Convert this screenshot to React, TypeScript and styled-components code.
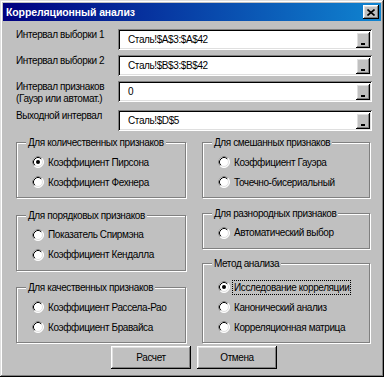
import React from 'react';
import styled, { createGlobalStyle } from 'styled-components';

const GlobalStyle = createGlobalStyle`
    html, body {
        margin: 0;
        padding: 0;
        background: #c0c0c0;
    }
    body {
        font-family: "Liberation Sans", Arial, sans-serif;
        font-size: 10px;
        letter-spacing: -0.4px;
        color: #000;
    }
    * {
        box-sizing: border-box;
    }
`;

const raised = `
    background: #c0c0c0;
    box-shadow: inset -1px -1px #000, inset 1px 1px #fff, inset -2px -2px #808080, inset 2px 2px #dfdfdf;
`;

const Window = styled.div`
    width: 384px;
    height: 377px;
    padding: 3px;
    display: flex;
    flex-direction: column;
    background: #c0c0c0;
    box-shadow: inset -1px -1px #000, inset 1px 1px #dfdfdf, inset -2px -2px #808080, inset 2px 2px #fff;
`;

const TitleBar = styled.div`
    height: 18px;
    display: flex;
    align-items: center;
    justify-content: space-between;
    padding: 0 2px 0 3px;
    background: linear-gradient(to right, #000080, #1084d0);
`;

const Title = styled.span`
    color: #fff;
    font-weight: bold;
    font-size: 10.5px;
    letter-spacing: -0.1px;
`;

const CloseButton = styled.button`
    width: 16px;
    height: 14px;
    padding: 0;
    border: none;
    display: flex;
    align-items: center;
    justify-content: center;
    ${raised}
`;

const Body = styled.div`
    flex: 1;
    display: flex;
    flex-direction: column;
    padding: 8px 9px 0 13px;
`;

const Fields = styled.div`
    display: grid;
    grid-template-columns: 102px 1fr;
    row-gap: 5px;
    align-items: start;
`;

const FieldLabel = styled.div`
    line-height: 12px;
    white-space: nowrap;
`;

const TextBox = styled.div`
    height: 21px;
    display: flex;
    align-items: center;
    justify-content: space-between;
    padding: 2px 2px 2px 10px;
    background: #fff;
    box-shadow: inset 1px 1px #808080, inset -1px -1px #fff, inset 2px 2px #000, inset -2px -2px #dfdfdf;
`;

const PickButton = styled.button`
    width: 14px;
    height: 16px;
    padding: 0 0 3px 0;
    border: none;
    display: flex;
    align-items: flex-end;
    justify-content: center;
    ${raised}

    &::after {
        content: '';
        width: 4px;
        height: 2px;
        background: #000;
    }
`;

const Groups = styled.div`
    display: grid;
    grid-template-columns: 170px 168px;
    column-gap: 16px;
    margin-top: 5px;
`;

const Column = styled.div`
    height: 207px;
    display: flex;
    flex-direction: column;
    justify-content: space-between;
`;

const Group = styled.fieldset<{ $padTop: number }>`
    margin: 0;
    padding: ${(p) => p.$padTop}px 0 5px 0;
    min-width: 0;
    border: 1px solid #808080;
    box-shadow: inset 1px 1px #fff, 1px 1px #fff;
`;

const Legend = styled.legend`
    margin-left: 9px;
    padding: 0 2px;
    line-height: 13px;
    background: #c0c0c0;
    white-space: nowrap;
`;

const Options = styled.div`
    display: flex;
    flex-direction: column;
    padding-left: 15px;
`;

const Option = styled.div`
    height: 20px;
    display: flex;
    align-items: center;
    gap: 3px;
    white-space: nowrap;
`;

const OptionText = styled.span<{ $focused?: boolean }>`
    padding: 0 1px;
    line-height: 13px;
    outline: ${(p) => (p.$focused ? '1px dotted #000' : 'none')};
`;

const RadioSvg = styled.svg`
    flex-shrink: 0;
`;

const Actions = styled.div`
    display: flex;
    justify-content: center;
    gap: 6px;
    margin-top: 3px;
`;

const Button = styled.button`
    width: 80px;
    height: 23px;
    border: none;
    padding: 0;
    font-family: inherit;
    font-size: 10px;
    letter-spacing: -0.4px;
    color: #000;
    ${raised}
`;

const Radio = ({ checked }: { checked?: boolean }) => (
    <RadioSvg width="12" height="12" viewBox="0 0 12 12">
        <circle cx="6" cy="6" r="5.5" fill="#fff" stroke="#fff" />
        <path d="M2.11 9.89A5.5 5.5 0 0 1 9.89 2.11" stroke="#808080" fill="none" />
        <circle cx="6" cy="6" r="4.5" fill="#fff" stroke="#dfdfdf" />
        <path d="M2.82 9.18A4.5 4.5 0 0 1 9.18 2.82" stroke="#000" fill="none" />
        {checked && <circle cx="6" cy="6" r="2" fill="#000" />}
    </RadioSvg>
);

interface OptionDef {
    label: string;
    checked?: boolean;
    focused?: boolean;
}

interface RadioGroupProps {
    title: string;
    options: OptionDef[];
    padTop?: number;
}

const RadioGroup = ({ title, options, padTop = 3 }: RadioGroupProps) => (
    <Group $padTop={padTop}>
        <Legend>{title}</Legend>
        <Options>
            {options.map((o) => (
                <Option key={o.label}>
                    <Radio checked={o.checked} />
                    <OptionText $focused={o.focused}>{o.label}</OptionText>
                </Option>
            ))}
        </Options>
    </Group>
);

const fields = [
    { label: 'Интервал выборки 1', value: 'Сталь!$A$3:$A$42' },
    { label: 'Интервал выборки 2', value: 'Сталь!$B$3:$B$42' },
    { label: 'Интервал признаков\n(Гауэр или автомат.)', value: '0' },
    { label: 'Выходной интервал', value: 'Сталь!$D$5' },
];

const App = () => (
    <>
        <GlobalStyle />
        <Window>
            <TitleBar>
                <Title>Корреляционный анализ</Title>
                <CloseButton aria-label="close">
                    <svg width="8" height="7" viewBox="0 0 8 7">
                        <path d="M0.5 0.5L7.5 6.5M7.5 0.5L0.5 6.5" stroke="#000" strokeWidth="1.6" />
                    </svg>
                </CloseButton>
            </TitleBar>
            <Body>
                <Fields>
                    {fields.map((f) => (
                        <React.Fragment key={f.label}>
                            <FieldLabel>
                                {f.label.split('\n').map((line) => (
                                    <div key={line}>{line}</div>
                                ))}
                            </FieldLabel>
                            <TextBox>
                                <span>{f.value}</span>
                                <PickButton aria-label="select" />
                            </TextBox>
                        </React.Fragment>
                    ))}
                </Fields>
                <Groups>
                    <Column>
                        <RadioGroup
                            title="Для количественных признаков"
                            options={[{ label: 'Коэффициент Пирсона', checked: true }, { label: 'Коэффициент Фехнера' }]}
                        />
                        <RadioGroup
                            title="Для порядковых признаков"
                            options={[{ label: 'Показатель Спирмэна' }, { label: 'Коэффициент Кендалла' }]}
                        />
                        <RadioGroup
                            title="Для качественных признаков"
                            options={[{ label: 'Коэффициент Рассела-Рао' }, { label: 'Коэффициент Бравайса' }]}
                        />
                    </Column>
                    <Column>
                        <RadioGroup
                            title="Для смешанных признаков"
                            options={[{ label: 'Коэффициент Гауэра' }, { label: 'Точечно-бисериальный' }]}
                        />
                        <RadioGroup title="Для разнородных признаков" options={[{ label: 'Автоматический выбор' }]} />
                        <RadioGroup
                            title="Метод анализа"
                            padTop={7}
                            options={[
                                { label: 'Исследование корреляции', checked: true, focused: true },
                                { label: 'Канонический анализ' },
                                { label: 'Корреляционная матрица' },
                            ]}
                        />
                    </Column>
                </Groups>
                <Actions>
                    <Button>Расчет</Button>
                    <Button>Отмена</Button>
                </Actions>
            </Body>
        </Window>
    </>
);

export default App;
